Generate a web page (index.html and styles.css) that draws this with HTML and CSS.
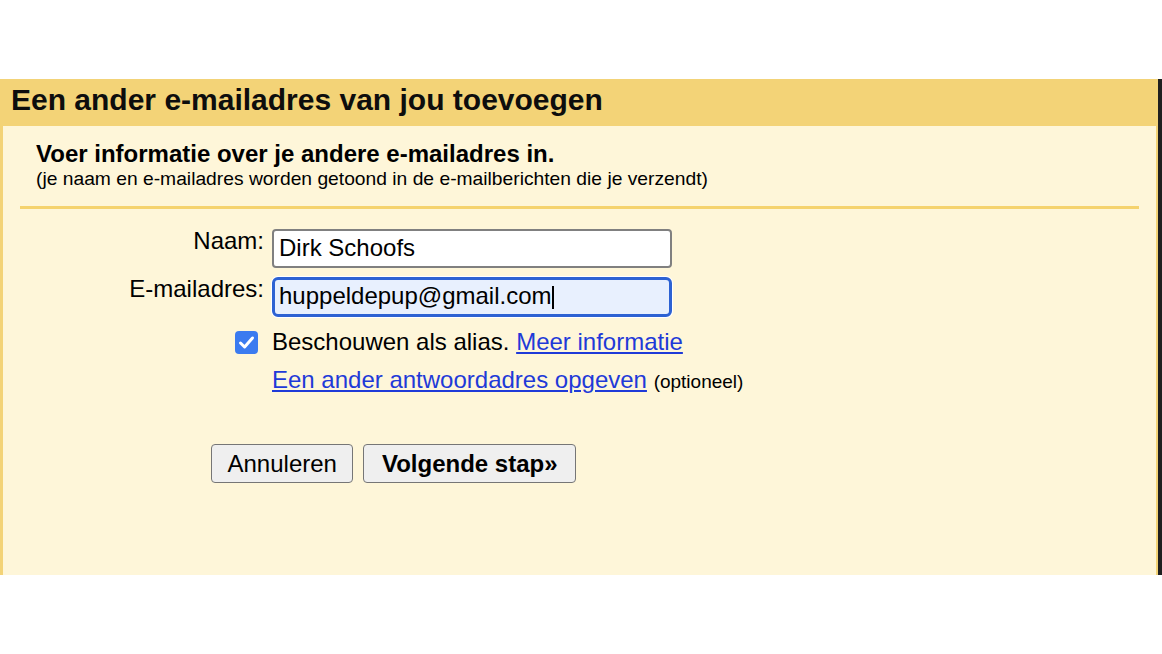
FILE: index.html
```html
<!DOCTYPE html>
<html lang="nl">
<head>
<meta charset="utf-8">
<title>Een ander e-mailadres van jou toevoegen</title>
<link rel="stylesheet" href="styles.css">
</head>
<body>
<div class="window">
  <div class="panel">
    <h1 class="title">Een ander e-mailadres van jou toevoegen</h1>
    <div class="intro">
      <p class="lead">Voer informatie over je andere e-mailadres in.</p>
      <p class="note">(je naam en e-mailadres worden getoond in de e-mailberichten die je verzendt)</p>
    </div>
    <div class="rule"></div>
    <div class="form">
      <label class="label" for="naam">Naam:</label>
      <input class="input" id="naam" type="text" value="Dirk Schoofs">
      <label class="label">E-mailadres:</label>
      <div class="input focused">huppeldepup@gmail.com<span class="caret"></span></div>
      <span class="check"><svg viewBox="0 0 23 23" width="23" height="23"><rect x="0" y="0" width="23" height="23" rx="4" fill="#3b7bf0"/><path d="M5.5 12 L9.6 16 L17.5 7" fill="none" stroke="#fff" stroke-width="3" stroke-linecap="round" stroke-linejoin="round"/></svg></span>
      <div class="opt alias">Beschouwen als alias. <a class="link" href="#">Meer informatie</a></div>
      <div class="opt reply"><a class="link" href="#">Een ander antwoordadres opgeven</a> <span class="small">(optioneel)</span></div>
    </div>
    <div class="buttons">
      <button class="btn" type="button">Annuleren</button>
      <button class="btn primary" type="button">Volgende stap»</button>
    </div>
  </div>
</div>
</body>
</html>
```

FILE: styles.css
```css
* { box-sizing: border-box; }

html, body {
  margin: 0;
  padding: 0;
  background: #ffffff;
}

body {
  font-family: "Liberation Sans", Arial, Helvetica, sans-serif;
  color: #000;
}

.window {
  padding-top: 79px;
}

.panel {
  height: 496px;
  background: #fef6d9;
  border-left: 3px solid #f3d377;
  border-right: 2px solid #f3d377;
  box-shadow: 4px 0 0 0 #1f1f1f;
  width: 1158px;
}

.title {
  margin: 0 -2px 0 -3px;
  background: #f3d377;
  font-size: 30px;
  font-weight: bold;
  line-height: 41px;
  height: 47px;
  padding: 0 0 6px 11px;
  color: #0d0d0d;
}

.intro {
  padding: 14px 0 0 33px;
}

.lead {
  margin: 0;
  font-size: 24px;
  font-weight: bold;
  line-height: 28px;
}

.note {
  margin: 0;
  font-size: 19.25px;
  line-height: 22px;
}

.rule {
  margin: 16px 17px 0 17px;
  height: 3px;
  background: #f5d36e;
}

.form {
  margin-top: 20px;
  display: grid;
  grid-template-columns: 261px 400px;
  column-gap: 8px;
  row-gap: 9px;
  align-items: start;
}

.label {
  text-align: right;
  font-size: 24px;
  line-height: 24px;
}

.input {
  width: 400px;
  height: 39px;
  margin: 0;
  border: 2px solid #808080;
  border-radius: 4px;
  background: #fff;
  font-family: "Liberation Sans", Arial, Helvetica, sans-serif;
  font-size: 24px;
  color: #000;
  padding: 0 5px 2px 5px;
  outline: none;
}

.input.focused {
  height: 40px;
  border: 3px solid #2d62d3;
  border-radius: 6px;
  background: #e8f0fe;
  padding: 0 4px;
  line-height: 31px;
  box-shadow: 0 0 0 1px #ffffff;
}

.caret {
  display: inline-block;
  width: 2px;
  height: 23px;
  background: #000;
  vertical-align: -5px;
}

.check {
  grid-column: 1;
  justify-self: end;
  align-self: center;
  margin: 2px 6px 0 0;
  width: 23px;
  height: 23px;
  display: block;
}

.check svg { display: block; }

.opt {
  grid-column: 2;
  font-size: 24px;
  line-height: 28px;
  white-space: nowrap;
}

.alias {
  margin-top: 2px;
}

.reply {
  margin-top: 1px;
}

.link {
  color: #1f3ad8;
  text-decoration: underline;
  text-decoration-thickness: 1.5px;
  text-underline-offset: 2px;
}

.small {
  font-size: 19px;
}

.buttons {
  margin-top: 48px;
  padding-left: 208px;
  display: flex;
  gap: 10px;
}

.btn {
  height: 39px;
  margin: 0;
  padding: 0 15.5px;
  border: 1.5px solid #767676;
  border-radius: 4px;
  background: #efefef;
  font-family: "Liberation Sans", Arial, Helvetica, sans-serif;
  font-size: 24px;
  color: #000;
  line-height: 1;
}

.btn.primary {
  font-weight: bold;
  padding: 0 17.5px;
}
```
